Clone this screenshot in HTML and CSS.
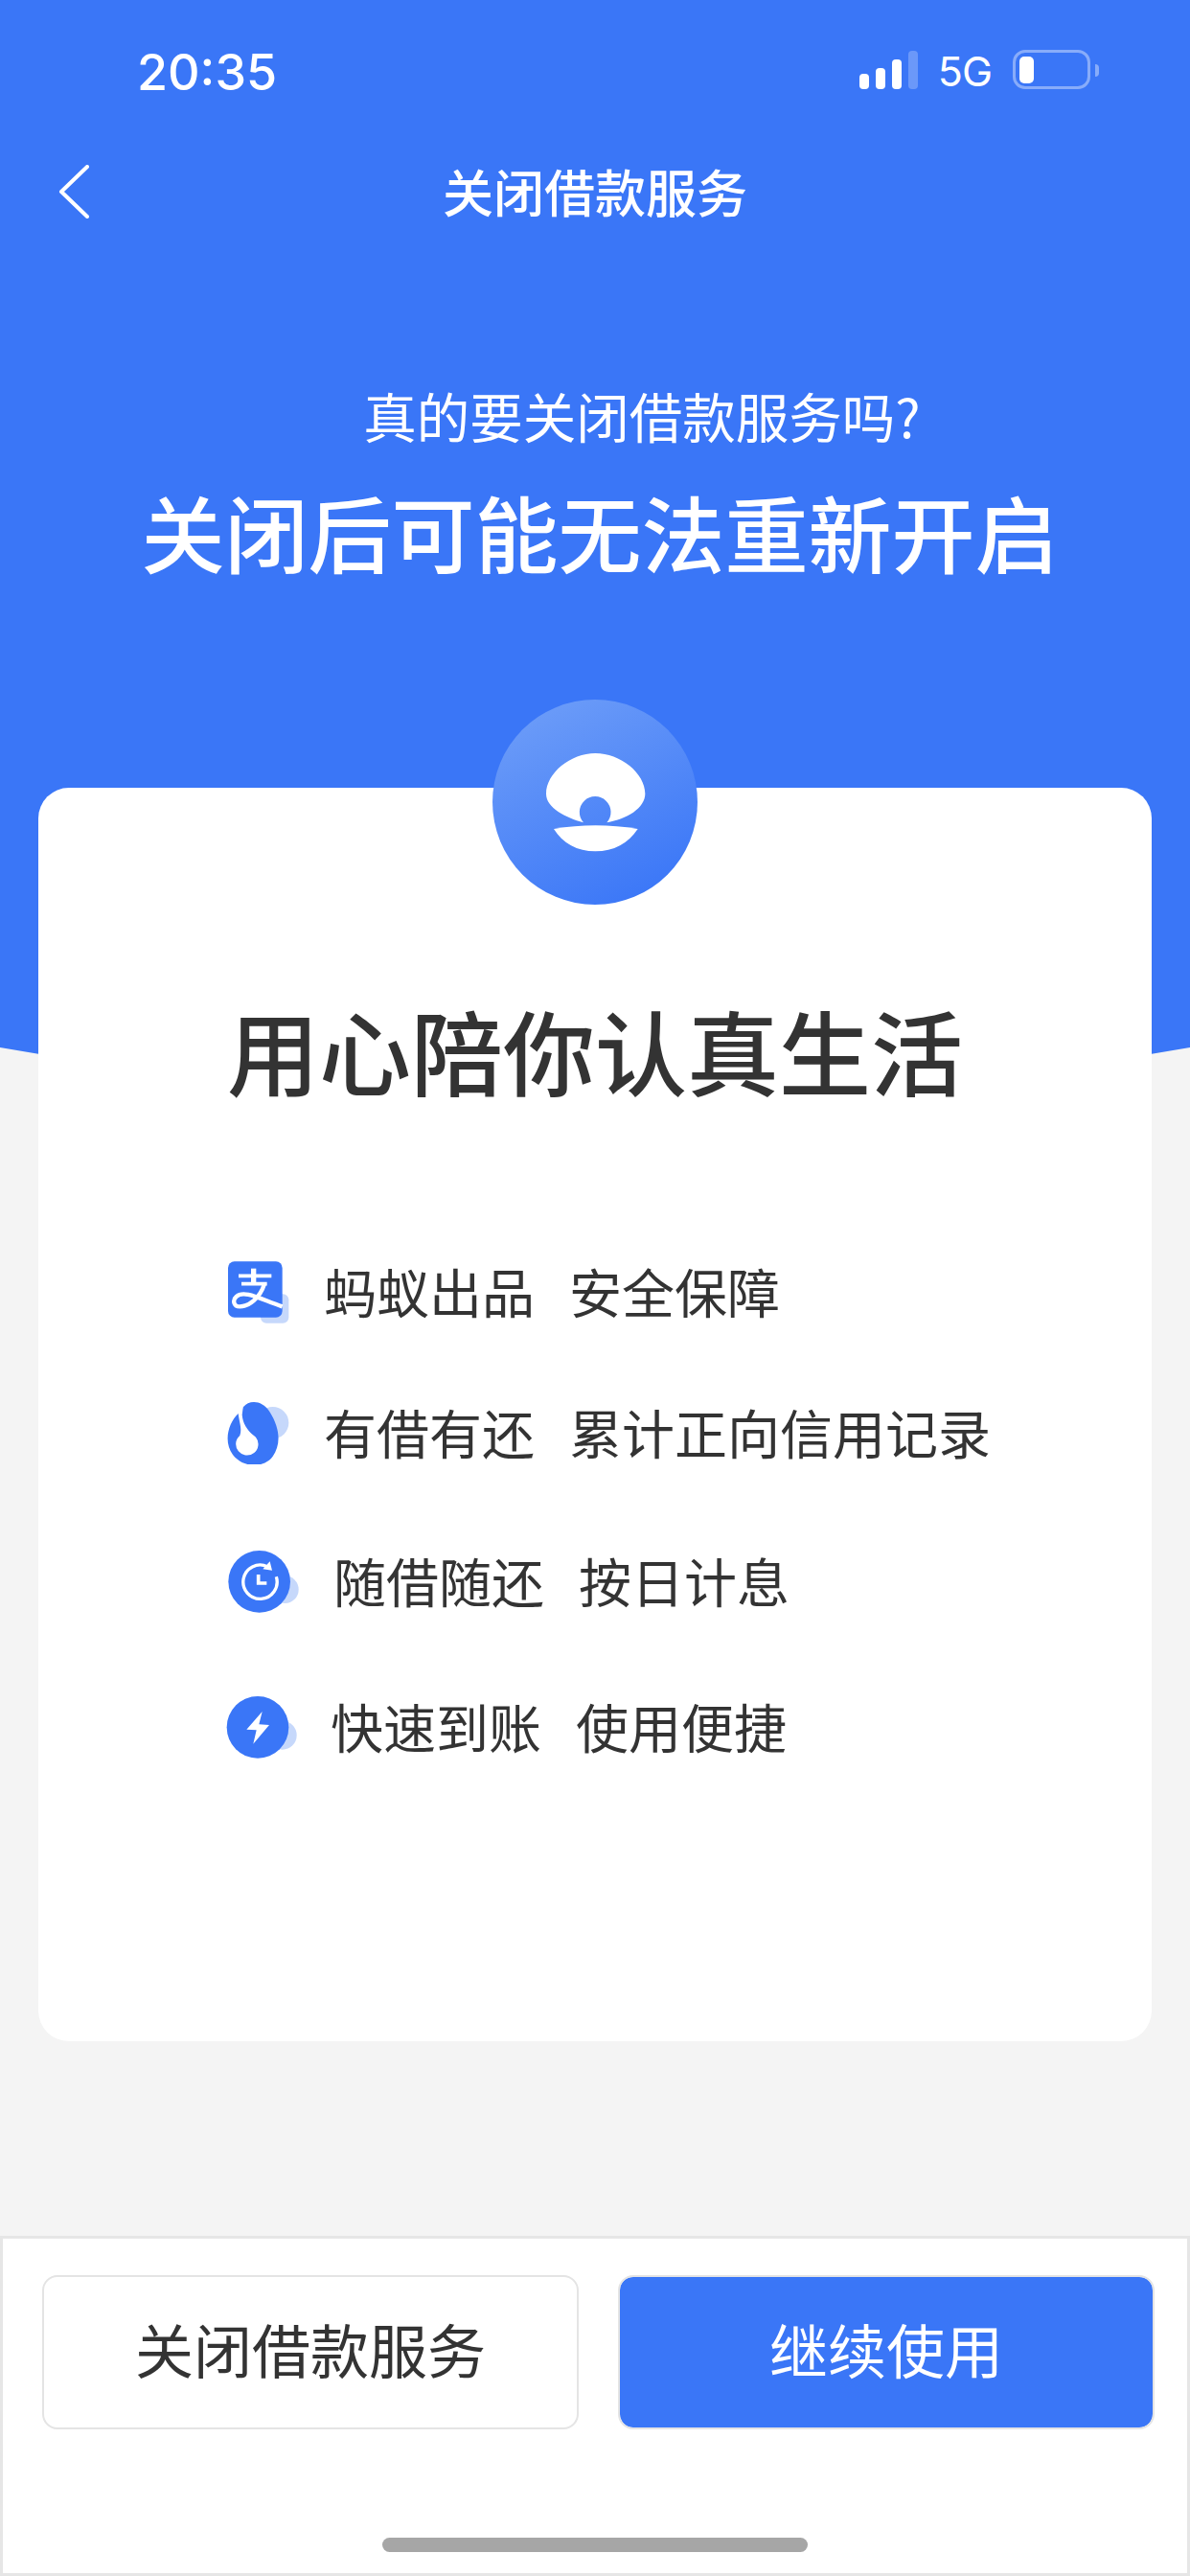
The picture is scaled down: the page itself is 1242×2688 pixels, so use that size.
FILE: index.html
```html
<!DOCTYPE html>
<html lang="zh-CN">
<head>
    <meta charset="UTF-8">
    <meta name="viewport" content="width=device-width, initial-scale=1.0">
    <title>关闭借款服务</title>
    <link rel="stylesheet" href="styles.css">
</head>
<body>
    <div class="page">
        <header class="hero">
            <div class="status-bar">
                <span class="time">20:35</span>
                <div class="status-icons">
                    <div class="signal">
                        <span class="bar bar-1"></span>
                        <span class="bar bar-2"></span>
                        <span class="bar bar-3"></span>
                        <span class="bar bar-4"></span>
                    </div>
                    <span class="network">5G</span>
                    <div class="battery"><span class="battery-level"></span></div>
                    <span class="battery-nub"></span>
                </div>
            </div>
            <nav class="nav">
                <svg class="back" viewBox="0 0 32 56" fill="none" stroke="#fff" stroke-width="4" stroke-linecap="round" stroke-linejoin="round">
                    <path d="M30 2 3 28l27 26"/>
                </svg>
                <h1 class="nav-title">关闭借款服务</h1>
            </nav>
            <p class="hero-question">真的要关闭借款服务吗?</p>
            <p class="hero-title">关闭后可能无法重新开启</p>
        </header>

        <main class="card">
            <svg class="logo" viewBox="220 90 642 642">
                <defs>
                    <linearGradient id="logoFill" x1="0.25" y1="0" x2="0.75" y2="1">
                        <stop offset="0" stop-color="#6c9cf8"/>
                        <stop offset="1" stop-color="#3a76f7"/>
                    </linearGradient>
                </defs>
                <circle cx="541" cy="411" r="321" fill="url(#logoFill)"/>
                <path fill="#fff" d="M505 475C450 460 388 430 388 385 388 320 465 258 542 258 620 258 698 320 698 385 698 430 640 465 578 475A49 49 0 1 0 505 475Z"/>
                <path fill="#fff" d="M412 495Q542 473 675 495C645 540 600 565 542 565 485 565 440 540 412 495Z"/>
            </svg>
            <h2 class="card-title">用心陪你认真生活</h2>
            <ul class="perks">
                <li class="perk">
                    <svg class="perk-icon" viewBox="79 69 231 210">
                        <rect x="187" y="187" width="88" height="91" rx="18" fill="#c6d8fb"/>
                        <rect x="85" y="85" width="170" height="175" rx="20" fill="#3a76f7"/>
                        <g fill="none" stroke="#fff">
                            <path stroke-width="11" d="M118 130H221M127 155H207"/>
                            <path stroke-width="16" d="M165 107V158"/>
                            <path stroke-width="13" d="M199 155C185 200 150 226 122 226 101 226 99 205 111 195 135 172 190 205 255 226"/>
                        </g>
                    </svg>
                    <div class="perk-words"><span>蚂蚁出品</span><span>安全保障</span></div>
                </li>
                <li class="perk perk-second">
                    <svg class="perk-icon" viewBox="79 510 231 210">
                        <circle cx="225" cy="590" r="50" fill="#c6d8fb"/>
                        <path fill="#3a76f7" d="M130 545C145 518 190 515 215 555 250 610 250 660 225 695 195 735 130 730 100 690 70 650 85 590 118 560Z"/>
                        <path fill="#fff" d="M116 552C119 588 130 605 122 630A35 35 0 1 0 172 635C152 620 132 600 129 565L132 542Z"/>
                    </svg>
                    <div class="perk-words"><span>有借有还</span><span>累计正向信用记录</span></div>
                </li>
                <li class="perk perk-third">
                    <svg class="perk-icon" viewBox="79 75 231 210">
                        <circle cx="263" cy="212" r="43" fill="#c6d8fb"/>
                        <circle cx="183" cy="187" r="97" fill="#3a76f7"/>
                        <path fill="none" stroke="#fff" stroke-width="10" d="M236 172A53 53 0 1 1 208 140"/>
                        <path fill="#fff" d="M216 124 223 152 194 148Z"/>
                        <path fill="none" stroke="#fff" stroke-width="11" d="M180 165V192H206"/>
                    </svg>
                    <div class="perk-words"><span>随借随还</span><span>按日计息</span></div>
                </li>
                <li class="perk perk-fourth">
                    <svg class="perk-icon" viewBox="79 531 231 210">
                        <circle cx="255" cy="668" r="45" fill="#c6d8fb"/>
                        <circle cx="178" cy="643" r="97" fill="#3a76f7"/>
                        <path fill="#fff" d="M192 594 143 650 174 652 164 695 214 636 182 634Z"/>
                    </svg>
                    <div class="perk-words"><span>快速到账</span><span>使用便捷</span></div>
                </li>
            </ul>
        </main>

        <footer class="footer">
            <div class="actions">
                <button class="btn btn-close">关闭借款服务</button>
                <button class="btn btn-keep">继续使用</button>
            </div>
            <div class="home-indicator"></div>
        </footer>
    </div>
</body>
</html>
```

FILE: styles.css
```css
* {
    box-sizing: border-box;
}

body {
    margin: 0;
    font-family: "Noto Sans CJK SC", "Noto Sans", sans-serif;
    background-color: #f4f4f4;
    color: #333;
}

.page {
    display: flex;
    flex-direction: column;
    width: 1242px;
    height: 2688px;
    overflow: hidden;
}

/* blue header, its bottom edge is a very flat arc */
.hero {
    height: 1150px;
    background-color: #3a76f7;
    color: #fff;
    clip-path: circle(3590px at 621px -2443px);
}

.status-bar {
    display: flex;
    justify-content: space-between;
    align-items: flex-start;
    height: 146px;
    padding: 0 95px 0 143px;
}

.time {
    margin-top: 45px;
    font-family: Inter, sans-serif;
    font-size: 52px;
    font-weight: 500;
    line-height: 62px;
}

.status-icons {
    display: flex;
    align-items: flex-end;
    height: 93px;
}

.signal {
    display: flex;
    align-items: flex-end;
    gap: 7px;
}

.bar {
    width: 10px;
    border-radius: 4px;
    background-color: #fff;
}

.bar-1 {
    height: 16px;
}

.bar-2 {
    height: 22px;
}

.bar-3 {
    height: 31px;
}

.bar-4 {
    height: 40px;
    background-color: rgba(255, 255, 255, 0.25);
}

.network {
    margin: 0 0 -2px 21px;
    font-family: Inter, sans-serif;
    font-size: 43px;
    letter-spacing: -1px;
    line-height: 42px;
}

.battery {
    width: 81px;
    height: 41px;
    margin-left: 22px;
    padding: 4px;
    border: 3px solid rgba(255, 255, 255, 0.4);
    border-radius: 13px;
}

.battery-level {
    display: block;
    width: 15px;
    height: 28px;
    border-radius: 5px;
    background-color: #fff;
}

.battery-nub {
    width: 4px;
    height: 13px;
    margin: 0 0 13px 5px;
    border-radius: 0 4px 4px 0;
    background-color: rgba(255, 255, 255, 0.4);
}

.nav {
    display: grid;
    grid-template-columns: 1fr auto 1fr;
    align-items: center;
    height: 108px;
    padding-left: 61px;
}

.back {
    width: 32px;
    height: 56px;
}

.nav-title {
    margin: -3px 0 0 -61px;
    font-size: 53px;
    font-weight: 500;
    line-height: 108px;
}

.hero-question {
    margin: 139px 0 0;
    padding-left: 98px;
    font-size: 55.5px;
    font-weight: 400;
    line-height: 80px;
    text-align: center;
}

.hero-title {
    margin: 21px 0 0;
    padding-left: 10px;
    font-size: 87px;
    font-weight: 500;
    line-height: 120px;
    text-align: center;
}

.card {
    position: relative;
    width: 1162px;
    height: 1308px;
    margin: -328px auto 0;
    border-radius: 32px;
    background-color: #fff;
}

.logo {
    display: block;
    width: 214px;
    height: 214px;
    margin: -92px auto 0;
}

.card-title {
    margin: 91px 0 0;
    font-size: 96px;
    font-weight: 500;
    line-height: 120px;
    text-align: center;
}

.perks {
    margin: 146px 0 0;
    padding: 0 0 0 196px;
    list-style: none;
}

.perk {
    display: flex;
    align-items: center;
    gap: 25px;
    height: 90px;
}

.perk-second {
    margin-top: 57px;
}

.perk-third {
    margin-top: 65px;
    gap: 35px;
}

.perk-fourth {
    margin-top: 62px;
    gap: 32px;
}

.perk-icon {
    flex: none;
    width: 77px;
    height: 70px;
}

.perk-words {
    display: flex;
    gap: 36px;
    font-size: 55px;
    font-weight: 400;
}

.footer {
    display: flex;
    flex-direction: column;
    align-items: center;
    height: 355px;
    margin-top: auto;
    padding: 38px 34px 0 41px;
    border: 3px solid #e6e6e6;
    background-color: #fff;
}

.actions {
    display: flex;
    justify-content: space-between;
    width: 100%;
}

.btn {
    width: 560px;
    height: 161px;
    padding: 0 0 8px;
    border: 2px solid #e4e4e4;
    border-radius: 16px;
    font-family: inherit;
    font-size: 61px;
    font-weight: 400;
}

.btn-close {
    background-color: #fff;
    color: #333;
}

.btn-keep {
    background-color: #3a76f7;
    background-clip: padding-box;
    color: #fff;
}

.home-indicator {
    width: 444px;
    height: 15px;
    margin: 113px 7px 0 0;
    border-radius: 8px;
    background-color: #a6a6a6;
}
```
